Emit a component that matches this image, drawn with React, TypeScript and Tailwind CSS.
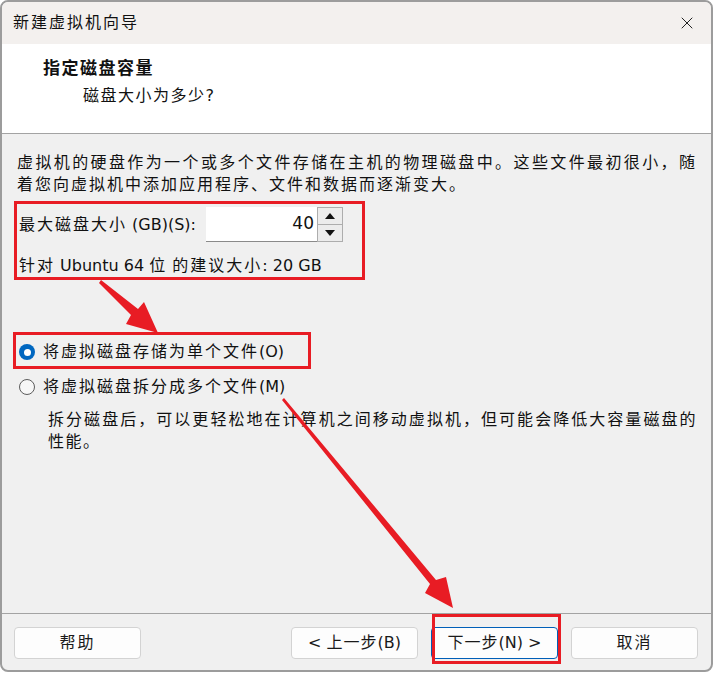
import { X } from "lucide-react";

const FONT = "font-['DejaVu_Sans','Noto_Sans_CJK_SC',sans-serif]";

function Cjk({ children }: { children: React.ReactNode }) {
  return <span className="tracking-[2px]">{children}</span>;
}

function DialogButton({ label, focused }: { label: React.ReactNode; focused?: boolean }) {
  return (
    <button
      className={
        focused
          ? "w-[127px] h-[32px] rounded-[4px] bg-[#fdfdfd] border border-[#005fb8] text-[16px] text-[#1a1a1a] flex items-center justify-center"
          : "w-[127px] h-[32px] rounded-[4px] bg-[#fdfdfd] border border-[#d3d3d3] text-[16px] text-[#1a1a1a] flex items-center justify-center"
      }
    >
      {label}
    </button>
  );
}

export default function App() {
  return (
    <div className={`relative w-[714px] h-[674px] bg-white overflow-hidden ${FONT}`}>
      <div className="w-[713px] h-[672px] border-2 border-[#9c9c9c] rounded-[8px] overflow-hidden flex flex-col bg-[#f0f0f0] text-[#111]">
        {/* title bar */}
        <div className="h-[42px] shrink-0 bg-[#f3f0ee] flex items-center justify-between pl-[11px] pr-[14px]">
          <span className="text-[16px] tracking-[2px]">新建虚拟机向导</span>
          <X size={20} strokeWidth={1.2} className="text-[#222]" />
        </div>

        {/* header */}
        <div className="h-[90px] shrink-0 bg-white border-b border-[#a3a3a3] pl-[41px] pt-[12px]">
          <div className="text-[17px] leading-[24px] font-bold tracking-[1.5px]">指定磁盘容量</div>
          <div className="mt-[4px] ml-[40px] text-[16px] leading-[24px]">
            <span className="tracking-[1.5px]">磁盘大小为多少</span>?
          </div>
        </div>

        {/* body */}
        <div className="flex-1 flex flex-col text-[16px]">
          <div className="pt-[18px] pl-[15px] pr-[14px] leading-[22px] tracking-[2px]">
            <div className="text-justify [text-align-last:justify]">
              虚拟机的硬盘作为一个或多个文件存储在主机的物理磁盘中。这些文件最初很小，随
            </div>
            <div>着您向虚拟机中添加应用程序、文件和数据而逐渐变大。</div>
          </div>

          <div className="mt-[11px] pl-[17px] h-[35px] flex items-center">
            <div className="w-[187px]">
              <Cjk>最大磁盘大小</Cjk> (GB)(S):
            </div>
            <div className="w-[111px] h-[35px] bg-white border-b border-[#8a8a8a] flex items-center justify-end pr-[3px] text-[17px]">
              40
            </div>
            <div className="w-[26px] h-[35px] flex flex-col">
              <div className="flex-1 bg-[#ececec] border border-[#adadad] flex items-center justify-center">
                <svg width="10" height="6" viewBox="0 0 10 6">
                  <path d="M0 6 L5 0 L10 6 Z" fill="#111" />
                </svg>
              </div>
              <div className="flex-1 bg-[#ececec] border border-t-0 border-[#adadad] flex items-center justify-center">
                <svg width="10" height="6" viewBox="0 0 10 6">
                  <path d="M0 0 L5 6 L10 0 Z" fill="#111" />
                </svg>
              </div>
            </div>
          </div>

          <div className="mt-[13px] pl-[17px] leading-[22px]">
            <Cjk>针对</Cjk> Ubuntu 64 <Cjk>位</Cjk> <Cjk>的建议大小</Cjk>: 20 GB
          </div>

          <div className="mt-[64px] pl-[17px] h-[22px] flex items-center gap-[8px]">
            <div className="w-[16px] h-[16px] rounded-full bg-[#0067c0] flex items-center justify-center">
              <div className="w-[7px] h-[7px] rounded-full bg-white" />
            </div>
            <span>
              <span className="tracking-[2px]">将虚拟磁盘存储为单个文件</span>(O)
            </span>
          </div>

          <div className="mt-[13px] pl-[17px] h-[22px] flex items-center gap-[8px]">
            <div className="w-[16px] h-[16px] rounded-full border border-[#5c5c5c] bg-[#f7f7f7]" />
            <span>
              <span className="tracking-[2px]">将虚拟磁盘拆分成多个文件</span>(M)
            </span>
          </div>

          <div className="mt-[11px] pl-[46px] pr-[14px] leading-[22px] tracking-[1.5px]">
            <div className="whitespace-nowrap text-justify [text-align-last:justify]">
              拆分磁盘后，可以更轻松地在计算机之间移动虚拟机，但可能会降低大容量磁盘的
            </div>
            <div>性能。</div>
          </div>

          {/* footer */}
          <div className="mt-auto border-t border-[#a3a3a3] pt-[13px] pb-[11px] pl-[12px] pr-[13px] flex items-center">
            <DialogButton label={<span className="tracking-[2px]">帮助</span>} />
            <div className="flex-1" />
            <div className="flex gap-[13px]">
              <DialogButton
                label={
                  <span>
                    &lt; <span className="tracking-[1px]">上一步</span>(B)
                  </span>
                }
              />
              <DialogButton
                focused
                label={
                  <span>
                    <span className="tracking-[1px]">下一步</span>(N) &gt;
                  </span>
                }
              />
              <DialogButton label={<span className="tracking-[2px]">取消</span>} />
            </div>
          </div>
        </div>
      </div>

      {/* annotations */}
      <div className="absolute left-[14px] top-[201px] w-[351px] h-[79px] border-[3px] border-[#e81c24] pointer-events-none" />
      <div className="absolute left-[13px] top-[332px] w-[298px] h-[37px] border-[3px] border-[#e81c24] pointer-events-none" />
      <div className="absolute left-[432px] top-[614px] w-[129px] h-[50px] border-[3px] border-[#e81c24] pointer-events-none" />
      <svg className="absolute left-0 top-0 pointer-events-none" width="714" height="674">
        <polygon
          points="99,283 101,280 138,309 144,302 158,333 126,324 131,315"
          fill="#e81c24"
        />
        <polygon
          points="282,400 284,398 436,580 446,577 453,608 425,593 430,584"
          fill="#e81c24"
        />
      </svg>
    </div>
  );
}
